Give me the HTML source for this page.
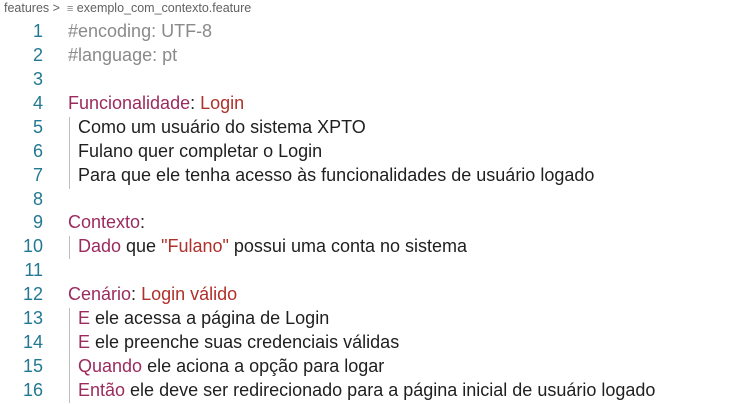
<!DOCTYPE html>
<html><head><style>
body{margin:0;background:#fff;width:750px;height:404px;overflow:hidden;font-family:"Liberation Sans",Arial,sans-serif}
.bc{position:absolute;top:0;left:4px;font-size:12.5px;color:#616161;line-height:16px}
.ln{position:absolute;left:0;width:43px;text-align:right;font-size:18px;color:#237893}
.tx{position:absolute;left:68px;font-size:18px;color:#1f1f1f;white-space:pre}
.c{color:#8a8a8a}.k{color:#9b2a5e}.t{color:#b0302b}
.g{position:absolute;left:69px;width:1px;background:#bdbdbd}
</style></head><body>
<div class="bc">features &gt;&nbsp; <span style="font-size:11px;color:#888">&#8801;</span> exemplo_com_contexto.feature</div>
<div id="c"></div>
<div class="g" style="top:117px;height:72px"></div>
<div class="g" style="top:236px;height:23px"></div>
<div class="g" style="top:308px;height:95px"></div>
<script>
var L=[
'<span class="c">#encoding: UTF-8</span>',
'<span class="c">#language: pt</span>',
'',
'<span class="k">Funcionalidade</span>: <span class="t">Login</span>',
'  Como um usuário do sistema XPTO',
'  Fulano quer completar o Login',
'  Para que ele tenha acesso às funcionalidades de usuário logado',
'',
'<span class="k">Contexto</span>:',
'  <span class="k">Dado</span> que <span class="t">"Fulano"</span> possui uma conta no sistema',
'',
'<span class="k">Cenário</span>: <span class="t">Login válido</span>',
'  <span class="k">E</span> ele acessa a página de Login',
'  <span class="k">E</span> ele preenche suas credenciais válidas',
'  <span class="k">Quando</span> ele aciona a opção para logar',
'  <span class="k">Então</span> ele deve ser redirecionado para a página inicial de usuário logado'];
var h='';
for(var i=0;i<16;i++){var y=21+i*23.93;
h+='<div class="ln" style="top:'+y+'px">'+(i+1)+'</div><div class="tx" style="top:'+y+'px">'+L[i].replace(/^  /,'<span style="display:inline-block;width:10px"></span>')+'</div>';}
document.getElementById('c').innerHTML=h;
</script>
</body></html>
